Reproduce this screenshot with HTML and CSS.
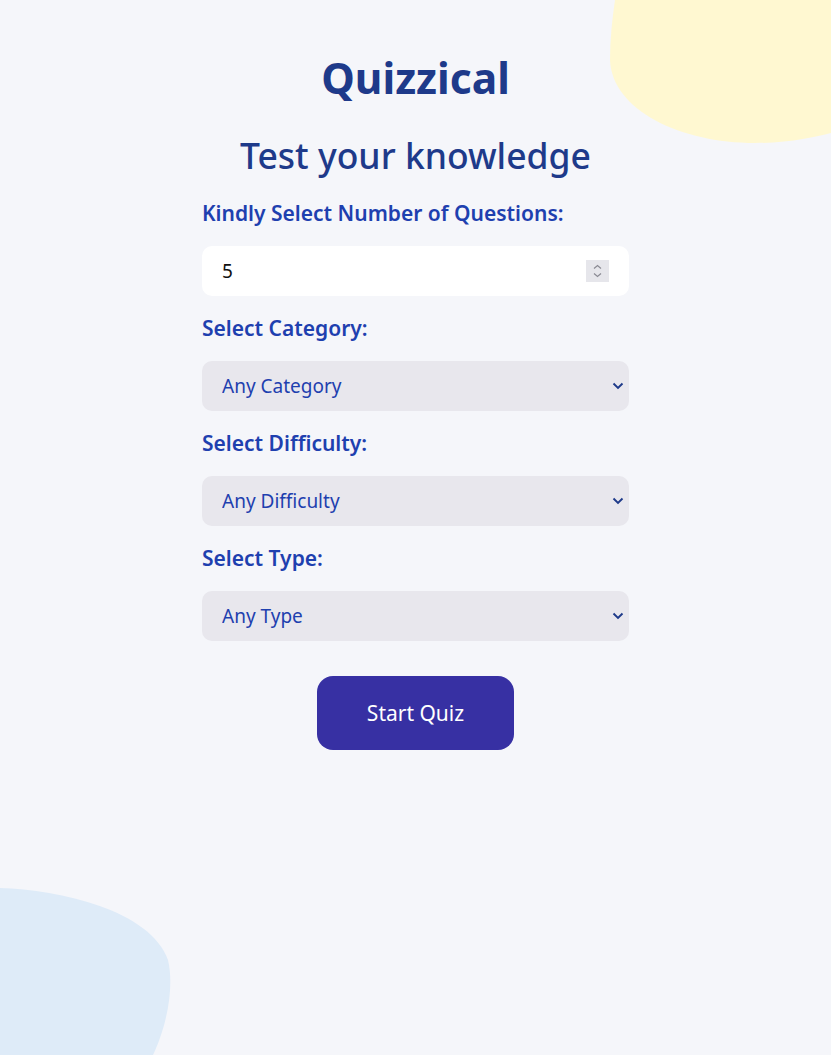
FILE: index.html
```html
<!DOCTYPE html>
<html lang="en">
<head>
<meta charset="utf-8">
<title>Quizzical</title>
<link rel="stylesheet" href="styles.css">
</head>
<body>
<svg class="blob blob-top" width="221" height="144" viewBox="610 0 221 144" aria-hidden="true">
  <path d="M615,0 C612,20 610,40 610,60 C612,110 680,143 755,143 C790,143 815,137 831,133 L831,0 Z" fill="#fff8d1"/>
</svg>
<svg class="blob blob-bottom" width="172" height="168" viewBox="0 887 172 168" aria-hidden="true">
  <path d="M0,888 C60,890 150,910 168,960 C175,990 165,1030 153,1055 L0,1055 Z" fill="#deebf8"/>
</svg>
<main class="page">
  <h1 class="title">Quizzical</h1>
  <h2 class="subtitle">Test your knowledge</h2>
  <form class="form">
    <div class="field">
      <label class="label" for="num">Kindly Select Number of Questions:</label>
      <div class="number-wrap">
        <input class="control number" id="num" type="number" value="5" min="1" max="50">
        <span class="spinner" aria-hidden="true">
          <svg width="23" height="22" viewBox="0 0 23 22"><path d="M8 8.5 L11.5 5.5 L15 8.5 M8 13.5 L11.5 16.5 L15 13.5" fill="none" stroke="#8a8a93" stroke-width="1.2"/></svg>
        </span>
      </div>
    </div>
    <div class="field">
      <label class="label" for="cat">Select Category:</label>
      <select class="control select" id="cat"><option>Any Category</option></select>
    </div>
    <div class="field">
      <label class="label" for="dif">Select Difficulty:</label>
      <select class="control select" id="dif"><option>Any Difficulty</option></select>
    </div>
    <div class="field">
      <label class="label" for="typ">Select Type:</label>
      <select class="control select" id="typ"><option>Any Type</option></select>
    </div>
    <button class="start" type="button">Start Quiz</button>
  </form>
</main>
</body>
</html>
```
FILE: styles.css
```css
* { box-sizing: border-box; }
html, body { margin: 0; padding: 0; }
body {
  background: #f5f6fa;
  font-family: "Noto Sans", "Open Sans", sans-serif;
  min-height: 1055px;
  position: relative;
  overflow: hidden;
}
.blob { position: absolute; display: block; }
.blob-top { top: 0; right: 0; }
.blob-bottom { left: 0; bottom: 0; }
.page {
  position: relative;
  width: 427px;
  margin: 0 auto;
  padding-top: 48px;
  display: flex;
  flex-direction: column;
  align-items: center;
}
.title {
  margin: 0;
  font-size: 42.5px;
  font-weight: 700;
  color: #1e3a8a;
  line-height: 60px;
}
.subtitle {
  margin: 22px 0 0;
  font-size: 35.5px;
  font-weight: 500;
  color: #1e3a8a;
  line-height: 50px;
}
.form {
  width: 100%;
  margin-top: 16px;
  display: flex;
  flex-direction: column;
  gap: 15px;
}
.field { display: flex; flex-direction: column; gap: 16px; }
.label {
  font-size: 21px;
  font-weight: 600;
  color: #1e40af;
  line-height: 34px;
}
.control {
  width: 100%;
  height: 50px;
  border: none;
  border-radius: 10px;
  padding: 0 20px;
  font-family: inherit;
  font-size: 19px;
  outline: none;
}
.number-wrap { position: relative; }
.number { background: #fff; color: #111; -moz-appearance: textfield; }
.number::-webkit-inner-spin-button,
.number::-webkit-outer-spin-button { -webkit-appearance: none; margin: 0; }
.spinner {
  position: absolute;
  top: 14px;
  right: 20px;
  width: 23px;
  height: 22px;
  background: #e6e6eb;
  display: block;
}
.spinner svg { display: block; }
.select {
  -webkit-appearance: none;
  appearance: none;
  background-color: #e8e7ed;
  color: #1e40af;
  background-image: url("data:image/svg+xml;utf8,<svg xmlns='http://www.w3.org/2000/svg' width='12' height='8' viewBox='0 0 12 8'><path d='M1.5 1.5 L6 6 L10.5 1.5' fill='none' stroke='%231e3a8a' stroke-width='1.9'/></svg>");
  background-repeat: no-repeat;
  background-position: right 5px center;
  background-size: 12px 8px;
}
.start {
  align-self: center;
  margin-top: 20px;
  width: 197px;
  height: 74px;
  border: none;
  border-radius: 16px;
  background: #3730a3;
  color: #fff;
  font-family: inherit;
  font-size: 21px;
  font-weight: 400;
}
```
